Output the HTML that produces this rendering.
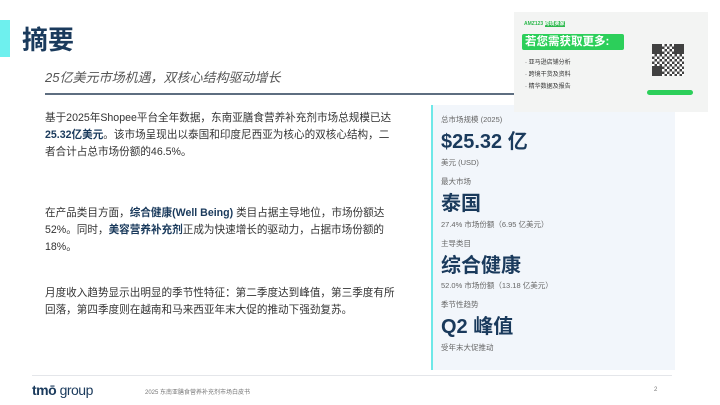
<!DOCTYPE html>
<html><head><meta charset="utf-8"><style>
*{margin:0;padding:0;box-sizing:border-box}
body{width:720px;height:405px;overflow:hidden;background:#fff;font-family:"Liberation Sans","Noto Sans CJK SC",sans-serif;position:relative;color:#333}
.a{position:absolute;white-space:nowrap}
.bar{left:0;top:20px;width:10px;height:37px;background:#6ef0ee}
.t{left:22px;top:20px;font-size:26px;font-weight:bold;color:#1a3a5c}
.sub{left:45px;top:67px;font-size:13px;font-style:italic;color:#555}
.hl{left:45px;top:93px;width:480px;height:2px;background:#5e6e80}
.body{left:45px;font-size:10.6px;line-height:17px;color:#333}
.body b{color:#1a3a5c}
.panel{left:431px;top:105px;width:244px;height:265px;background:#f2f6fb;border-left:2px solid #6ee8e8}
.lb{left:441px;font-size:7.5px;color:#666}
.big{left:441px;font-size:20px;font-weight:bold;color:#1a3a5c}
.ad{left:514px;top:12px;width:194px;height:100px;background:#f3f4f3}
.qr{left:652px;top:44px;width:32px;height:32px;background:
linear-gradient(#222,#222) 0 0/10px 10px no-repeat,linear-gradient(#222,#222) 22px 0/10px 10px no-repeat,linear-gradient(#222,#222) 0 22px/10px 10px no-repeat,
repeating-conic-gradient(#222 0 25%,#fff 0 50%) 0 0/5px 5px;opacity:.85}
</style></head><body>
<div class="a bar"></div>
<div class="a t">摘要</div>
<div class="a sub">25亿美元市场机遇，双核心结构驱动增长</div>
<div class="a hl"></div>
<div class="a body" style="top:110px">基于2025年Shopee平台全年数据，东南亚膳食营养补充剂市场总规模已达<br><b>25.32亿美元</b>。该市场呈现出以泰国和印度尼西亚为核心的双核心结构，二<br>者合计占总市场份额的46.5%。</div>
<div class="a body" style="top:205px">在产品类目方面，<b>综合健康(Well Being)</b> 类目占据主导地位，市场份额达<br>52%。同时，<b>美容营养补充剂</b>正成为快速增长的驱动力，占据市场份额的<br>18%。</div>
<div class="a body" style="top:285px">月度收入趋势显示出明显的季节性特征：第二季度达到峰值，第三季度有所<br>回落，第四季度则在越南和马来西亚年末大促的推动下强劲复苏。</div>
<div class="a panel"></div>
<div class="a lb" style="top:114px">总市场规模 (2025)</div>
<div class="a big" style="top:125px">$25.32 亿</div>
<div class="a lb" style="top:157px">美元 (USD)</div>
<div class="a lb" style="top:176px">最大市场</div>
<div class="a big" style="top:187px">泰国</div>
<div class="a lb" style="top:219px">27.4% 市场份额（6.95 亿美元）</div>
<div class="a lb" style="top:238px">主导类目</div>
<div class="a big" style="top:249px">综合健康</div>
<div class="a lb" style="top:280px">52.0% 市场份额（13.18 亿美元）</div>
<div class="a lb" style="top:299px">季节性趋势</div>
<div class="a big" style="top:310px">Q2 峰值</div>
<div class="a lb" style="top:342px">受年末大促推动</div>
<div class="a ad"></div>
<div class="a" style="left:524px;top:20px;font-size:5px;color:#2db84d;font-weight:bold">AMZ123 <span style="background:#2db84d;color:#fff">跨境卖家</span></div>
<div class="a" style="left:522px;top:34px;width:102px;height:16px;background:#2ccf5a;border-radius:2px;color:#fff;font-size:11.5px;font-weight:bold;padding-left:3px;line-height:16px">若您需获取更多:</div>
<div class="a" style="left:525px;top:57px;font-size:6px;color:#333;line-height:12px">· 亚马逊店铺分析<br>· 跨境干货及资料<br>· 精华数据及报告</div>
<div class="a qr"></div>
<div class="a" style="left:647px;top:90px;width:46px;height:5px;background:#2ccf5a;border-radius:3px"></div>
<div class="a" style="left:32px;top:375px;width:640px;height:1px;background:#e4e6ea"></div>
<div class="a" style="left:32px;top:382px;font-size:14px;color:#1a3a5c;font-weight:bold;letter-spacing:-0.5px">tmō <span style="font-weight:normal">group</span></div>
<div class="a" style="left:145px;top:387px;font-size:6px;color:#777">2025 东南亚膳食营养补充剂市场白皮书</div>
<div class="a" style="left:654px;top:387px;font-size:6px;color:#777">2</div>
</body></html>
